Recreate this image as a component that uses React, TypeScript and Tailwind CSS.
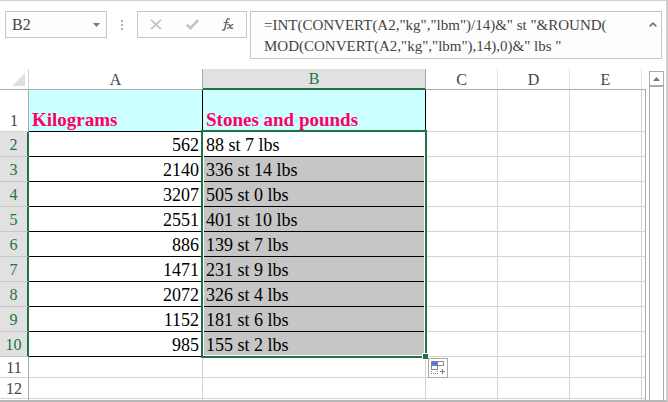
import React from "react";

const rows = [
  { kg: 562, result: "88 st 7 lbs" },
  { kg: 2140, result: "336 st 14 lbs" },
  { kg: 3207, result: "505 st 0 lbs" },
  { kg: 2551, result: "401 st 10 lbs" },
  { kg: 886, result: "139 st 7 lbs" },
  { kg: 1471, result: "231 st 9 lbs" },
  { kg: 2072, result: "326 st 4 lbs" },
  { kg: 1152, result: "181 st 6 lbs" },
  { kg: 985, result: "155 st 2 lbs" },
];

const formula =
  '=INT(CONVERT(A2,"kg","lbm")/14)&" st "&ROUND(\nMOD(CONVERT(A2,"kg","lbm"),14),0)&" lbs "';

function FormulaBar() {
  return (
    <header className="flex items-start pt-[10px] pl-[5px] pr-[4px] text-[16px] text-[#444]">
      <div className="flex h-[27px] w-[102px] shrink-0 items-center border border-[#c6c6c6] bg-[#fdfdfd]">
        <input
          aria-label="Name box"
          defaultValue="B2"
          className="h-full w-full min-w-0 flex-1 bg-transparent pl-[6px] outline-none"
        />
        <button aria-label="Open name list" className="flex h-full w-[20px] items-center justify-center">
          <svg width="7" height="4" viewBox="0 0 7 4" fill="#777">
            <path d="M0 0h7L3.5 4z" />
          </svg>
        </button>
      </div>
      <div className="flex h-[27px] w-[30px] shrink-0 items-center justify-center">
        <svg width="2" height="10" viewBox="0 0 2 10" fill="#b0b0b0">
          <path d="M0 0h2v2H0zM0 4h2v2H0zM0 8h2v2H0z" />
        </svg>
      </div>
      <div className="flex h-[27px] w-[110px] shrink-0 items-center border border-[#c6c6c6] bg-[#fdfdfd]">
        <button aria-label="Cancel" className="flex h-full flex-1 items-center justify-center">
          <svg width="12" height="11" viewBox="0 0 12 11" fill="none" stroke="#c3c3c3" strokeWidth="1.8">
            <path d="M1 .8l10 9.4M11 .8L1 10.2" />
          </svg>
        </button>
        <button aria-label="Enter" className="flex h-full flex-1 items-center justify-center">
          <svg width="13" height="11" viewBox="0 0 13 11" fill="none" stroke="#c3c3c3" strokeWidth="2.4">
            <path d="M.8 5.6l3.6 3.6L12.2 1" />
          </svg>
        </button>
        <button aria-label="Insert function" className="flex h-full flex-1 items-center justify-center">
          <svg width="12" height="13" viewBox="0 0 12 13" fill="none" stroke="#666" strokeLinecap="round">
            <path strokeWidth="1.4" d="M7.3 1.2C5.8 .2 4.9 1.2 4.5 3L3 10c-.4 1.9-1.2 2.5-2.4 1.9" />
            <path strokeWidth="1.1" d="M2 4.5h4.5" />
            <path strokeWidth="1.3" d="M5.8 6.6c1.5-.6 1.8 .4 2.3 1.9s1 2.3 2.5 1.6M10.9 6.6c-1.3-.2-2 .8-2.7 1.8s-1.2 1.9-2.7 1.7" />
          </svg>
        </button>
      </div>
      <div className="ml-[3px] flex h-[48px] min-w-0 flex-1 border border-[#c6c6c6] bg-[#fdfdfd]">
        <textarea
          aria-label="Formula"
          defaultValue={formula}
          className="h-full min-w-0 flex-1 resize-none overflow-hidden whitespace-pre bg-transparent pt-[3px] pl-[13px] text-[15px] leading-[21px] outline-none"
        />
        <button aria-label="Collapse formula bar" className="flex h-[24px] w-[16px] items-center justify-center">
          <svg width="8" height="5" viewBox="0 0 8 5" fill="none" stroke="#777" strokeWidth="1.8">
            <path d="M.7 4.4L4 1.2l3.3 3.2" />
          </svg>
        </button>
      </div>
    </header>
  );
}

function Selection() {
  return (
    <div className="pointer-events-none absolute -top-[2px] -right-[2px] -left-[2px] h-[228px] border-2 border-[#217346]">
      <div className="h-full border border-white" />
      <div className="absolute -right-[4px] -bottom-[4px] h-[7px] w-[7px] border border-white bg-[#217346]" />
      <button
        aria-label="Auto fill options"
        className="pointer-events-auto absolute -right-[23px] -bottom-[22px] flex h-[20px] w-[20px] items-center justify-center border border-[#ababab] bg-white"
      >
        <svg width="14" height="14" viewBox="0 0 14 14" fill="none" stroke="#858585">
          <path d="M.5 .5h12v4H.5zM.5 4.5h6v4h-6zM6.5 .5v4" />
          <path d="M1 1h5v3H1z" fill="#3b82f6" stroke="none" />
          <path d="M0 10.5h1M0 12.5h1M2 12.5h1M4 12.5h1M6 12.5h1M6 10.5h1" />
          <path d="M9 10.5h5M11.5 8v5" strokeWidth="1.2" />
        </svg>
      </button>
    </div>
  );
}

function EmptyCells() {
  const cell = "border-r border-b border-[#d4d4d4]";
  return (
    <>
      <td className={cell} />
      <td className={cell} />
      <td className={cell} />
      <td className="border-r border-b border-r-[#ababab] border-b-[#d4d4d4]" />
    </>
  );
}

function Sheet() {
  const head = "border-r border-b border-r-[#e1e1e1] border-b-[#ababab] p-0 pt-px font-normal text-[#444]";
  const plainRow = "border-r border-b border-r-[#ababab] border-b-[#d4d4d4] p-0 font-normal text-[#444]";
  const title = "border-r border-b border-black bg-[#ccffff] pl-[3px] pb-px text-left align-bottom text-[19px] font-bold text-[#ff0066]";
  return (
    <table className="min-w-0 flex-1 table-fixed border-separate border-spacing-0 text-[18px] leading-[20px] text-black">
      <colgroup>
        <col className="w-[29px]" />
        <col className="w-[174px]" />
        <col className="w-[223px]" />
        <col className="w-[72px]" />
        <col className="w-[72px]" />
        <col className="w-[72px]" />
        <col />
      </colgroup>
      <thead className="text-[16px] leading-[18px]">
        <tr className="h-[21px]">
          <td className="border-r border-b border-r-[#d4d4d4] border-b-[#ababab] p-0">
            <svg className="ml-auto mr-[3px]" width="13" height="13" viewBox="0 0 13 13" fill="#dfdfdf">
              <path d="M13 0v13H0z" />
            </svg>
          </td>
          <th scope="col" className="border-r border-b border-[#ababab] p-0 pt-px font-normal text-[#444]">A</th>
          <th scope="col" className="border-r border-b-2 border-r-[#ababab] border-b-[#217346] bg-[#e1e1e1] p-0 pt-px font-normal text-[#217346]">B</th>
          <th scope="col" className={head}>C</th>
          <th scope="col" className={head}>D</th>
          <th scope="col" className={head}>E</th>
          <td className="border-b border-[#ababab] p-0" />
        </tr>
      </thead>
      <tbody>
        <tr className="h-[42px]">
          <th scope="row" className={plainRow + " align-bottom text-[16px]"}>1</th>
          <td className={title}>Kilograms</td>
          <td className={title}>Stones and pounds</td>
          <EmptyCells />
        </tr>
        {rows.map((row, i) => (
          <tr key={i} className="h-[25px]">
            <th scope="row" className="border-r-2 border-b border-r-[#217346] border-b-[#c6c6c6] bg-[#e1e1e1] p-0 pt-[2px] text-[16px] font-normal text-[#217346]">
              {i + 2}
            </th>
            <td className="border-r border-b border-black p-0 pt-[2px] pr-[3px] text-right">{row.kg}</td>
            <td className={"border-r border-b border-black p-0 pt-[2px] pl-[3px] " + (i === 0 ? "relative bg-white" : "bg-[#c6c6c6]")}>
              {row.result}
              {i === 0 && <Selection />}
            </td>
            <EmptyCells />
          </tr>
        ))}
        {[11, 12].map((n) => (
          <tr key={n} className="h-[21px]">
            <th scope="row" className={plainRow + " pt-[2px] text-[16px] leading-[18px]"}>{n}</th>
            <td className="border-r border-b border-[#d4d4d4]" />
            <td className="border-r border-b border-[#d4d4d4]" />
            <EmptyCells />
          </tr>
        ))}
        <tr className="h-px">
          <td className="border-r border-[#ababab] p-0" />
          <td className="border-r border-[#d4d4d4] p-0" />
          <td className="border-r border-[#d4d4d4] p-0" />
          <td className="border-r border-[#d4d4d4] p-0" />
          <td className="border-r border-[#d4d4d4] p-0" />
          <td className="border-r border-[#d4d4d4] p-0" />
          <td className="border-r border-[#ababab] p-0" />
        </tr>
      </tbody>
    </table>
  );
}

export default function App() {
  return (
    <div className="border-t border-r-2 border-b-2 border-t-[#d0d0d0] border-r-[#d0d0d0] border-b-[#b8b8b8] bg-white font-['Liberation_Serif','Times_New_Roman',serif]">
      <FormulaBar />
      <main className="mt-[10px] flex">
        <Sheet />
        <div className="mt-[2px] mr-[2px] ml-[3px] flex w-[15px] shrink-0 flex-col">
          <button aria-label="Scroll up" className="flex h-[15px] items-center justify-center border border-[#ababab]">
            <svg width="7" height="4" viewBox="0 0 7 4" fill="#777">
              <path d="M3.5 0L7 4H0z" />
            </svg>
          </button>
          <div className="flex-1 border-x border-t border-[#ababab]" />
        </div>
      </main>
    </div>
  );
}
